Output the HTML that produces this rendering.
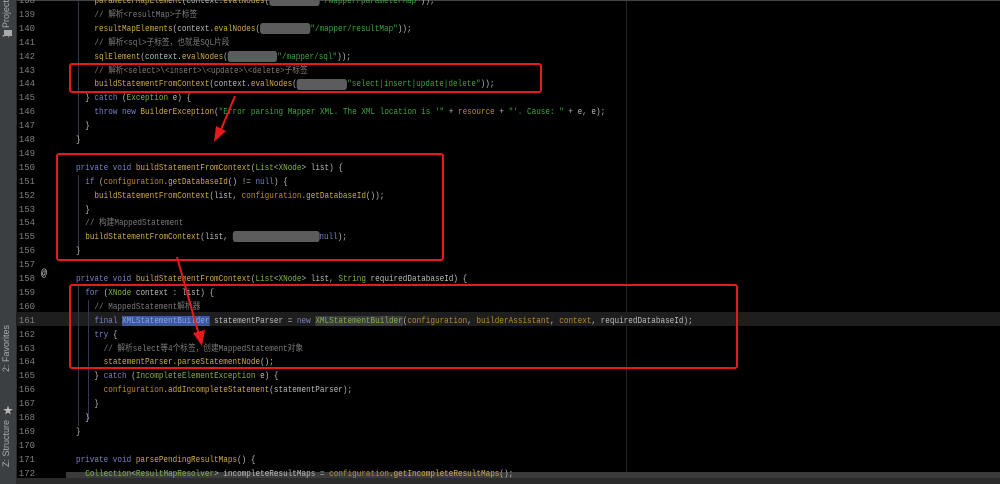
<!DOCTYPE html>
<html><head><meta charset="utf-8"><style>
body{margin:0;width:1000px;height:484px;background:#000;overflow:hidden;position:relative;font-family:"Liberation Mono","Noto Sans CJK SC",monospace;}
.strip{position:absolute;left:0;top:0;width:16px;height:484px;background:#3c3f41;border-right:1px solid #2a2a2a;}
.vt{position:absolute;left:1px;color:#aaa;font:9px "Liberation Sans",sans-serif;writing-mode:vertical-rl;transform:rotate(180deg);}
.ln{position:absolute;left:16px;width:19px;text-align:right;color:#7f7f7f;font-size:9px;line-height:13.9px;}
.l{position:absolute;left:76px;white-space:pre;font-size:9px;line-height:13.9px;color:#b9b9b9;transform:scaleX(0.852);transform-origin:0 0;}
.k{color:#7680c6}.m{color:#d0a84a}.f{color:#b98a2e}.t{color:#7fb347}.s{color:#3fa33f}.c{color:#7b7b7b}
.b{display:inline-block;height:11px;background:#5c5c5c;border-radius:3px;vertical-align:middle;}
.rb{position:absolute;border:2px solid #e8191b;border-radius:3px;}
.g{position:absolute;width:1px;background:#2c3a58;}
</style></head><body>
<div class="strip">
<div class="vt" style="top:0">1: Project</div>
<div style="position:absolute;left:4px;top:30px;width:8px;height:6px;background:#aaa"></div>
<div class="vt" style="top:325px">2: Favorites</div>
<div style="position:absolute;left:3px;top:402px;color:#bbb;font-size:10px">★</div>
<div class="vt" style="top:420px">Z: Structure</div>
</div>
<div style="position:absolute;left:626px;top:0;width:1px;height:472px;background:#262626"></div>
<div style="position:absolute;left:17px;top:0;width:983px;height:1px;background:#444"></div>
<div style="position:absolute;left:16px;top:312px;width:984px;height:14px;background:#1e1e1e"></div>
<div style="position:absolute;left:66px;top:472px;width:934px;height:6px;background:#3a3a3a"></div>
<div style="position:absolute;left:16px;top:478px;width:984px;height:6px;background:#2b2b2b"></div>
<div style="position:absolute;left:41px;top:269px;color:#ccc;font-size:10px">@</div>
<div class="g" style="left:78px;top:0;height:140px"></div>
<div class="g" style="left:78px;top:175px;height:75px"></div>
<div class="g" style="left:78px;top:286px;height:140px"></div>
<div class="g" style="left:88px;top:300px;height:120px"></div>

<div class="ln" style="top:-5px">138</div><div class="ln" style="top:8.9px">139</div><div class="ln" style="top:22.8px">140</div><div class="ln" style="top:36.7px">141</div><div class="ln" style="top:50.6px">142</div><div class="ln" style="top:64.5px">143</div><div class="ln" style="top:78.4px">144</div><div class="ln" style="top:92.3px">145</div><div class="ln" style="top:106.2px">146</div><div class="ln" style="top:120.1px">147</div><div class="ln" style="top:134px">148</div><div class="ln" style="top:147.9px">149</div><div class="ln" style="top:161.8px">150</div><div class="ln" style="top:175.7px">151</div><div class="ln" style="top:189.6px">152</div><div class="ln" style="top:203.5px">153</div><div class="ln" style="top:217.4px">154</div><div class="ln" style="top:231.3px">155</div><div class="ln" style="top:245.2px">156</div><div class="ln" style="top:259.1px">157</div><div class="ln" style="top:273px">158</div><div class="ln" style="top:286.9px">159</div><div class="ln" style="top:300.8px">160</div><div class="ln" style="top:314.7px">161</div><div class="ln" style="top:328.6px">162</div><div class="ln" style="top:342.5px">163</div><div class="ln" style="top:356.4px">164</div><div class="ln" style="top:370.3px">165</div><div class="ln" style="top:384.2px">166</div><div class="ln" style="top:398.1px">167</div><div class="ln" style="top:412px">168</div><div class="ln" style="top:425.9px">169</div><div class="ln" style="top:439.8px">170</div><div class="ln" style="top:453.7px">171</div><div class="ln" style="top:467.6px">172</div>

<div class="l" style="top:-5px">    <span class="m">parameterMapElement</span>(context.<span class="m">evalNodes</span>(<span class="b" style="width:59px"></span><span class="s">"/mapper/parameterMap"</span>));</div>
<div class="l" style="top:8.9px">    <span class="c">// 解析&lt;resultMap&gt;子标签</span></div>
<div class="l" style="top:22.8px">    <span class="m">resultMapElements</span>(context.<span class="m">evalNodes</span>(<span class="b" style="width:59px"></span><span class="s">"/mapper/resultMap"</span>));</div>
<div class="l" style="top:36.7px">    <span class="c">// 解析&lt;sql&gt;子标签，也就是SQL片段</span></div>
<div class="l" style="top:50.6px">    <span class="m">sqlElement</span>(context.<span class="m">evalNodes</span>(<span class="b" style="width:58px"></span><span class="s">"/mapper/sql"</span>));</div>
<div class="l" style="top:64.5px">    <span class="c">// 解析&lt;select&gt;\&lt;insert&gt;\&lt;update&gt;\&lt;delete&gt;子标签</span></div>
<div class="l" style="top:78.4px">    <span class="m">buildStatementFromContext</span>(context.<span class="m">evalNodes</span>(<span class="b" style="width:59px"></span><span class="s">"select|insert|update|delete"</span>));</div>
<div class="l" style="top:92.3px">  } <span class="k">catch</span> (<span class="t">Exception</span> e) {</div>
<div class="l" style="top:106.2px">    <span class="k">throw new</span> <span class="m">BuilderException</span>(<span class="s">"Error parsing Mapper XML. The XML location is '"</span> + <span class="f">resource</span> + <span class="s">"'. Cause: "</span> + e, e);</div>
<div class="l" style="top:120.1px">  }</div>
<div class="l" style="top:134px">}</div>
<div class="l" style="top:161.8px"><span class="k">private void</span> <span class="m">buildStatementFromContext</span>(<span class="t">List</span>&lt;<span class="t">XNode</span>&gt; list) {</div>
<div class="l" style="top:175.7px">  <span class="k">if</span> (<span class="f">configuration</span>.<span class="m">getDatabaseId</span>() != <span class="k">null</span>) {</div>
<div class="l" style="top:189.6px">    <span class="m">buildStatementFromContext</span>(list, <span class="f">configuration</span>.<span class="m">getDatabaseId</span>());</div>
<div class="l" style="top:203.5px">  }</div>
<div class="l" style="top:217.4px">  <span class="c">// 构建MappedStatement</span></div>
<div class="l" style="top:231.3px">  <span class="m">buildStatementFromContext</span>(list, <span class="b" style="width:102px"></span><span class="k">null</span>);</div>
<div class="l" style="top:245.2px">}</div>
<div class="l" style="top:273px"><span class="k">private void</span> <span class="m">buildStatementFromContext</span>(<span class="t">List</span>&lt;<span class="t">XNode</span>&gt; list, <span class="t">String</span> requiredDatabaseId) {</div>
<div class="l" style="top:286.9px">  <span class="k">for</span> (<span class="t">XNode</span> context : list) {</div>
<div class="l" style="top:300.8px">    <span class="c">// MappedStatement解析器</span></div>
<div class="l" style="top:314.7px">    <span class="k">final</span> <span style="background:#3a5a9a;color:#8fa0e0">XMLStatementBuilder</span> statementParser = <span class="k">new</span> <span class="t" style="background:#3a3a3a">XMLStatementBuilder</span>(<span class="f">configuration</span>, <span class="f">builderAssistant</span>, <span class="f">context</span>, requiredDatabaseId);</div>
<div class="l" style="top:328.6px">    <span class="k">try</span> {</div>
<div class="l" style="top:342.5px">      <span class="c">// 解析select等4个标签，创建MappedStatement对象</span></div>
<div class="l" style="top:356.4px">      <span class="m">statementParser.parseStatementNode</span>();</div>
<div class="l" style="top:370.3px">    } <span class="k">catch</span> (<span class="t">IncompleteElementException</span> e) {</div>
<div class="l" style="top:384.2px">      <span class="f">configuration</span>.<span class="m">addIncompleteStatement</span>(statementParser);</div>
<div class="l" style="top:398.1px">    }</div>
<div class="l" style="top:412px">  }</div>
<div class="l" style="top:425.9px">}</div>
<div class="l" style="top:453.7px"><span class="k">private void</span> <span class="m">parsePendingResultMaps</span>() {</div>
<div class="l" style="top:467.6px">  <span class="t">Collection</span>&lt;<span class="t">ResultMapResolver</span>&gt; incompleteResultMaps = <span class="f">configuration</span>.<span class="m">getIncompleteResultMaps</span>();</div>

<div class="rb" style="left:69px;top:63px;width:469px;height:26px"></div>
<div class="rb" style="left:56px;top:153px;width:384px;height:104px"></div>
<div class="rb" style="left:69px;top:284px;width:665px;height:81px"></div>
<svg style="position:absolute;left:0;top:0" width="1000" height="484">
<line x1="235" y1="96" x2="220" y2="132" stroke="#e8191b" stroke-width="2"/>
<polygon points="214,142 216,126 226,131" fill="#e8191b"/>
<line x1="177" y1="257" x2="199" y2="335" stroke="#e8191b" stroke-width="2"/>
<polygon points="202,346 193,333 205,330" fill="#e8191b"/>
</svg>
</body></html>
